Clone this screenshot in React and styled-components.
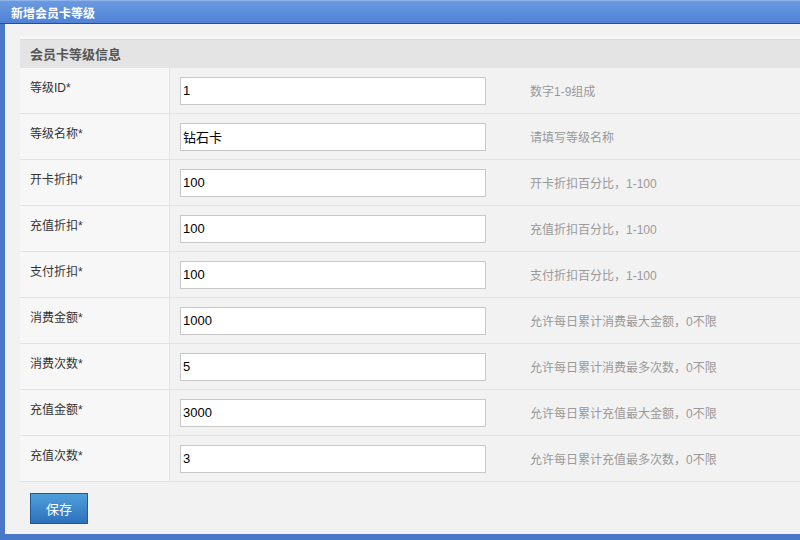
import React from 'react';
import styled, { createGlobalStyle } from 'styled-components';

const Global = createGlobalStyle`
    html, body {
        margin: 0;
        padding: 0;
        background: #f2f2f2;
        font-family: "Liberation Sans", "Noto Sans CJK SC", sans-serif;
        font-size: 12px;
    }
`;

const Window = styled.div`
    width: 800px;
    height: 540px;
    box-sizing: border-box;
    display: flex;
    flex-direction: column;
    border-left: 5px solid #4a78c9;
    border-bottom: 6px solid #4a78c9;
    background: #f2f2f2;
`;

const TitleBar = styled.div`
    height: 22px;
    margin-left: -5px;
    padding-left: 11px;
    display: flex;
    align-items: center;
    background: linear-gradient(#6a9ae0, #4f82d6);
    border-top: 1px solid #8fb4ec;
    border-bottom: 1px solid #2a4c8c;
    color: #fff;
    font-weight: bold;
    font-size: 12px;
`;

const Body = styled.div`
    flex: 1;
    padding: 12px 0 0 15px;
    box-sizing: border-box;
`;

const Section = styled.div`
    border-top: 3px solid #f7f7f7;
`;

const SectionHead = styled.div`
    height: 29px;
    padding: 0 0 2px 10px;
    box-sizing: border-box;
    display: flex;
    align-items: center;
    background: #e4e4e4;
    border-top: 1px solid #dcdcdc;
    color: #555;
    font-weight: bold;
    font-size: 13px;
`;

const Row = styled.div`
    display: flex;
    height: 45px;
    border-bottom: 1px solid #e2e2e2;
`;

const Label = styled.div`
    width: 139px;
    padding: 10px 0 0 10px;
    background: #f7f7f7;
    border-right: 1px solid #e4e4e4;
    color: #333;
    font-size: 12px;
`;

const Field = styled.div`
    display: flex;
    align-items: center;
    padding-left: 10px;
    flex: 1;
    background: #f2f2f2;
`;

const Input = styled.input`
    width: 306px;
    height: 28px;
    box-sizing: border-box;
    border: 1px solid #c8c8c8;
    background: #fff;
    padding: 0 2px;
    font-family: "Liberation Sans", "Noto Sans CJK SC", sans-serif;
    font-size: 13px;
    color: #000;
    outline: none;
`;

const Hint = styled.span`
    margin-left: 44px;
    color: #999;
    font-size: 12px;
`;

const Footer = styled.div`
    padding: 11px 0 0 10px;
`;

const SaveButton = styled.button`
    width: 58px;
    height: 31px;
    border: 1px solid #1d5a99;
    background: linear-gradient(#4fa0dc, #2d70bc);
    color: #fff;
    font-family: "Noto Sans CJK SC", sans-serif;
    font-size: 13px;
    cursor: pointer;
`;

const fields = [
    ['等级ID*', '1', '数字1-9组成'],
    ['等级名称*', '钻石卡', '请填写等级名称'],
    ['开卡折扣*', '100', '开卡折扣百分比，1-100'],
    ['充值折扣*', '100', '充值折扣百分比，1-100'],
    ['支付折扣*', '100', '支付折扣百分比，1-100'],
    ['消费金额*', '1000', '允许每日累计消费最大金额，0不限'],
    ['消费次数*', '5', '允许每日累计消费最多次数，0不限'],
    ['充值金额*', '3000', '允许每日累计充值最大金额，0不限'],
    ['充值次数*', '3', '允许每日累计充值最多次数，0不限'],
];

export default function App() {
    return (
        <Window>
            <Global />
            <TitleBar>新增会员卡等级</TitleBar>
            <Body>
                <Section>
                    <SectionHead>会员卡等级信息</SectionHead>
                    {fields.map(([label, value, hint]) => (
                        <Row key={label}>
                            <Label>{label}</Label>
                            <Field>
                                <Input defaultValue={value} />
                                <Hint>{hint}</Hint>
                            </Field>
                        </Row>
                    ))}
                </Section>
                <Footer>
                    <SaveButton>保存</SaveButton>
                </Footer>
            </Body>
        </Window>
    );
}
